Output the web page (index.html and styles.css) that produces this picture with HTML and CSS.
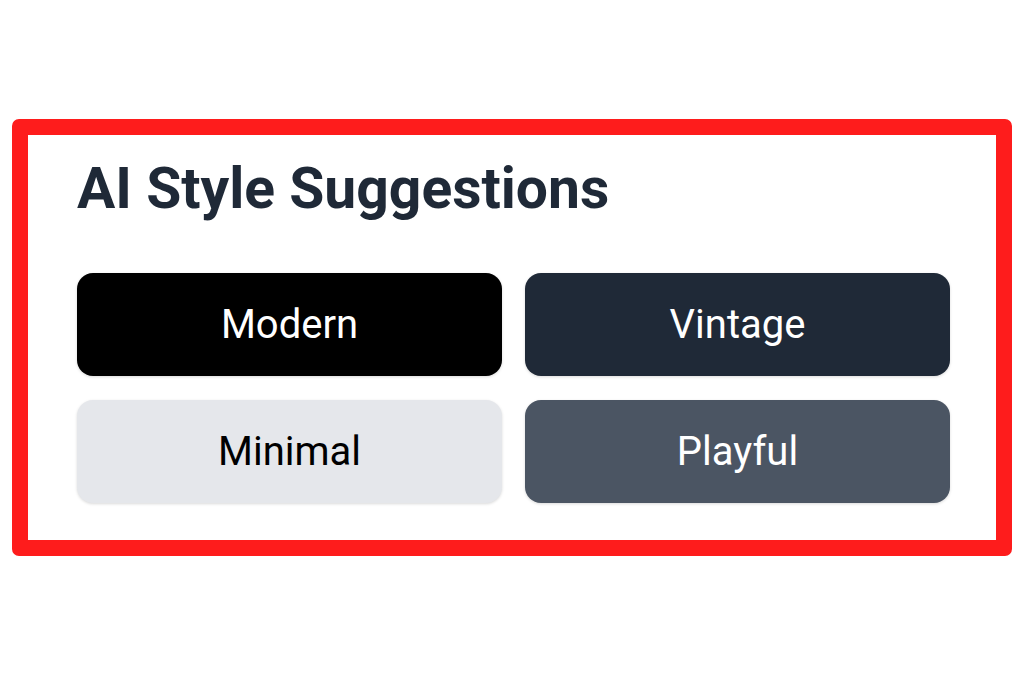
FILE: index.html
```html
<!DOCTYPE html>
<html lang="en">
<head>
  <meta charset="UTF-8">
  <meta name="viewport" content="width=device-width, initial-scale=1.0">
  <title>AI Style Suggestions</title>
  <link rel="stylesheet" href="styles.css">
</head>
<body>
  <div class="page">
    <div class="panel">
      <h1>AI Style Suggestions</h1>
      <div class="styles-grid">
        <button class="style-btn modern">Modern</button>
        <button class="style-btn vintage">Vintage</button>
        <button class="style-btn minimal">Minimal</button>
        <button class="style-btn playful">Playful</button>
      </div>
    </div>
  </div>
</body>
</html>
```

FILE: styles.css
```css
body {
  margin: 0;
  background-color: #fff;
  font-family: Roboto, "Liberation Sans", Arial, sans-serif;
}
.page {
  padding: 119px 12px 0 12px;
}
.panel {
  width: 1000px;
  height: 437px;
  box-sizing: border-box;
  border: 16px solid #fe1c1c;
  border-radius: 7px;
  padding: 24px 46px 0 49px;
}
h1 {
  margin: 0 0 54px 0;
  font-size: 57px;
  line-height: 60px;
  font-weight: 700;
  color: #1f2937;
}
.styles-grid {
  display: grid;
  grid-template-columns: 425px 425px;
  column-gap: 23px;
  row-gap: 24px;
}
.style-btn {
  height: 103px;
  border: none;
  border-radius: 16px;
  font-family: Roboto, "Liberation Sans", Arial, sans-serif;
  font-size: 40px;
  color: #fff;
  box-shadow: 0 1px 3px rgba(0, 0, 0, 0.15);
  cursor: pointer;
}
.style-btn.modern {
  background-color: #000;
}
.style-btn.vintage {
  background-color: #1f2937;
}
.style-btn.minimal {
  background-color: #e5e7eb;
  color: #000;
}
.style-btn.playful {
  background-color: #4b5563;
}
```
